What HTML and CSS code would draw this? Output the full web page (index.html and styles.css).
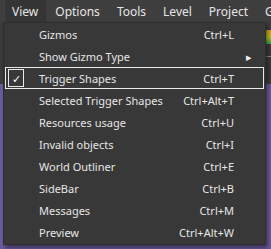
FILE: index.html
```html
<!DOCTYPE html>
<html lang="en">
<head>
    <meta charset="UTF-8">
    <title>View menu</title>
    <link rel="stylesheet" href="styles.css">
</head>
<body>
    <div class="menubar">
        <span class="tab active">View</span>
        <span class="tab">Options</span>
        <span class="tab">Tools</span>
        <span class="tab">Level</span>
        <span class="tab">Project</span>
        <span class="tab">G</span>
    </div>
    <div class="workspace">
        <div class="toolstrip">
            <span class="tool-icon"></span>
            <span class="tool-line"></span>
        </div>

        <ul class="dropdown">
            <li class="item"><span class="check"></span><span class="label">Gizmos</span><span class="key">Ctrl+L</span><span class="arrow"></span></li>
            <li class="item"><span class="check"></span><span class="label">Show Gizmo Type</span><span class="key"></span><span class="arrow">&#9656;</span></li>
            <li class="item selected"><span class="check checked">&#10003;</span><span class="label">Trigger Shapes</span><span class="key">Ctrl+T</span><span class="arrow"></span></li>
            <li class="item"><span class="check"></span><span class="label">Selected Trigger Shapes</span><span class="key">Ctrl+Alt+T</span><span class="arrow"></span></li>
            <li class="item"><span class="check"></span><span class="label">Resources usage</span><span class="key">Ctrl+U</span><span class="arrow"></span></li>
            <li class="item"><span class="check"></span><span class="label">Invalid objects</span><span class="key">Ctrl+I</span><span class="arrow"></span></li>
            <li class="item"><span class="check"></span><span class="label">World Outliner</span><span class="key">Ctrl+E</span><span class="arrow"></span></li>
            <li class="item"><span class="check"></span><span class="label">SideBar</span><span class="key">Ctrl+B</span><span class="arrow"></span></li>
            <li class="item"><span class="check"></span><span class="label">Messages</span><span class="key">Ctrl+M</span><span class="arrow"></span></li>
            <li class="item"><span class="check"></span><span class="label">Preview</span><span class="key">Ctrl+Alt+W</span><span class="arrow"></span></li>
        </ul>
    </div>
</body>
</html>
```

FILE: styles.css
```css
body {
    margin: 0;
    width: 271px;
    height: 249px;
    overflow: hidden;
    background-color: #6a5a9c;
    font-family: "Noto Sans", "Open Sans", sans-serif;
    font-size: 11px;
    color: #e6e6e6;
}
.menubar {
    height: 22px;
    background-color: #3e3e3e;
    display: flex;
    align-items: stretch;
    padding-left: 5px;
    font-size: 12px;
    white-space: nowrap;
    overflow: hidden;
}
.tab {
    display: flex;
    align-items: center;
    padding: 0 8px 0 7px;
    margin-right: 2px;
}
.tab.active {
    background-color: #353535;
}
.workspace {
    position: relative;
    height: 227px;
    background: linear-gradient(#3c3c3c 0, #3c3c3c 62px, #6a5a9c 62px);
}
.toolstrip {
    margin-left: 266px;
    padding-top: 8px;
    display: flex;
    flex-direction: column;
    gap: 12px;
}
.tool-icon {
    width: 5px;
    height: 14px;
    background: linear-gradient(#d8a020, #b8c020 50%, #30a050);
}
.tool-line {
    width: 5px;
    height: 1px;
    background-color: #888;
}
.dropdown {
    position: absolute;
    left: 3px;
    top: 0;
    width: 263px;
    margin: 0;
    padding: 0 0 1px 0;
    list-style: none;
    background-color: #383838;
    border: 1px solid #2e2e2e;
    box-sizing: border-box;
    box-shadow: 2px 3px 4px rgba(0, 0, 0, 0.45);
}
.item {
    display: flex;
    align-items: center;
    height: 22px;
    margin: 0 1px;
    box-sizing: border-box;
    border: 1px solid transparent;
}
.item.selected {
    border-color: #e8e8e8;
}
.check {
    width: 16px;
    height: 18px;
    margin: 0 15px 0 2px;
    box-sizing: border-box;
    display: flex;
    align-items: center;
    justify-content: center;
    font-size: 11px;
    color: #ffffff;
}
.check.checked {
    border: 1px solid #e8e8e8;
}
.label {
    flex: 1;
}
.key {
    text-align: right;
}
.arrow {
    width: 29px;
    text-align: center;
    font-size: 11px;
    color: #f0f0f0;
}
```
